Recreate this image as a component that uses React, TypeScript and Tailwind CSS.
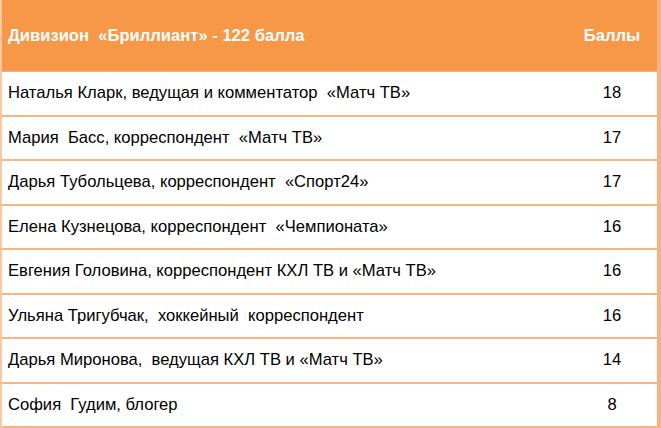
import React from "react";

const rows: [string, string][] = [
  ["Наталья Кларк, ведущая и комментатор  «Матч ТВ»", "18"],
  ["Мария  Басс, корреспондент  «Матч ТВ»", "17"],
  ["Дарья Тубольцева, корреспондент  «Спорт24»", "17"],
  ["Елена Кузнецова, корреспондент  «Чемпионата»", "16"],
  ["Евгения Головина, корреспондент КХЛ ТВ и «Матч ТВ»", "16"],
  ["Ульяна Тригубчак,  хоккейный  корреспондент", "16"],
  ["Дарья Миронова,  ведущая КХЛ ТВ и «Матч ТВ»", "14"],
  ["София  Гудим, блогер", "8"],
];

export default function App() {
  return (
    <div
      className="w-[661px] h-[428px] bg-white overflow-hidden"
      style={{ fontFamily: '"Liberation Sans", Arial, sans-serif' }}
    >
      <div className="flex flex-col h-full border-l-2 border-[#fbc8a0] border-r-[4px] border-r-[#f9b27e]">
        <div className="grid grid-cols-[1fr_90px] h-[72px] bg-[#f79848] items-center border-b border-[#f9b27e] text-white font-bold text-[16.6px] shrink-0">
          <div className="pl-[6px] whitespace-pre pt-[2px]">Дивизион  «Бриллиант» - 122 балла</div>
          <div className="text-center pt-[2px]">Баллы</div>
        </div>
        {rows.map(([name, pts], i) => (
          <div
            key={i}
            className="grid grid-cols-[1fr_90px] items-center h-[44.5px] shrink-0 border-b-2 border-[#f9b580] text-[16.6px] text-black"
          >
            <div className="pl-[6px] whitespace-pre pt-[1px]">{name}</div>
            <div className="text-center pt-[1px]">{pts}</div>
          </div>
        ))}
      </div>
    </div>
  );
}
